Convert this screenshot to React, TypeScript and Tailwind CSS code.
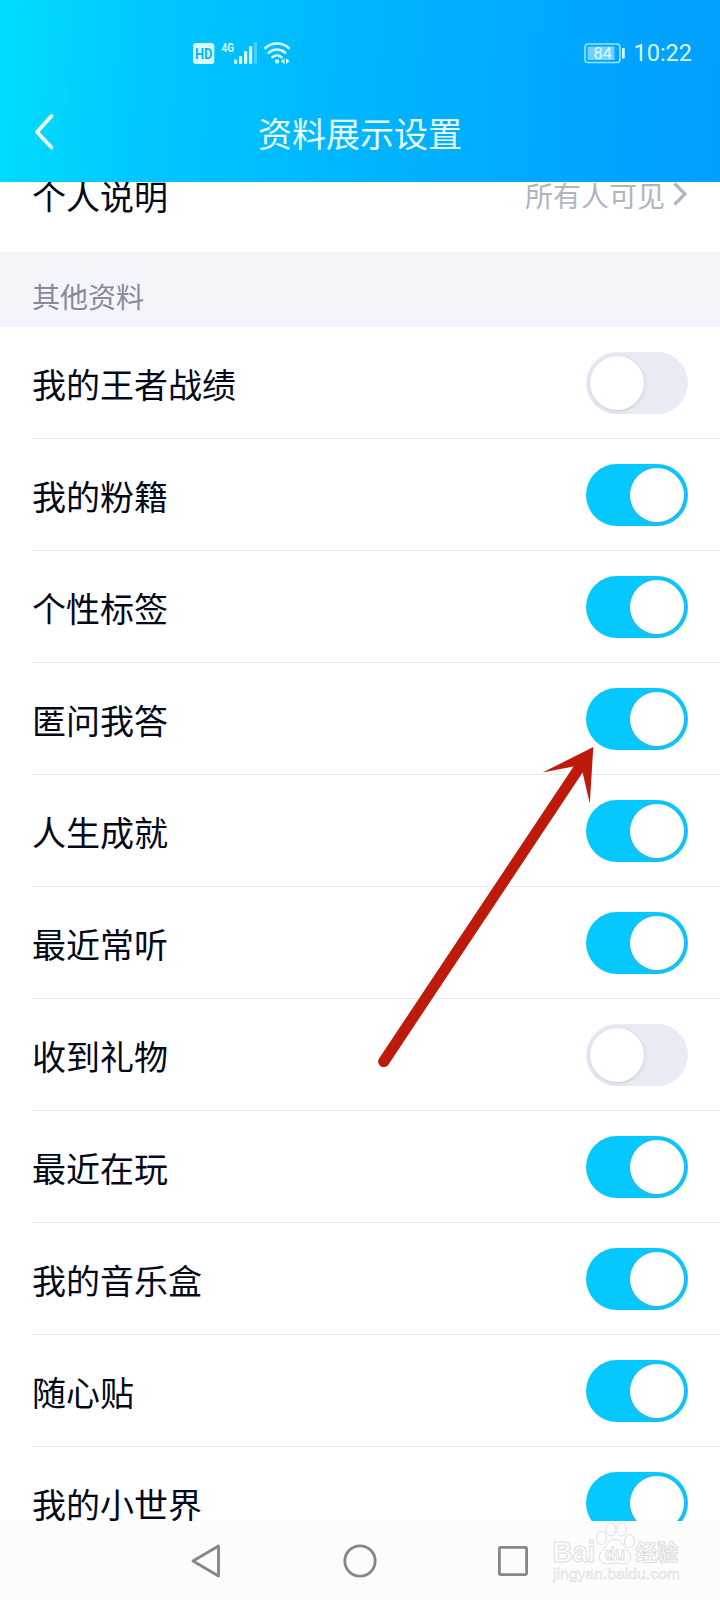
const settings = [
  { label: '我的王者战绩', on: false },
  { label: '我的粉籍', on: true },
  { label: '个性标签', on: true },
  { label: '匿问我答', on: true },
  { label: '人生成就', on: true },
  { label: '最近常听', on: true },
  { label: '收到礼物', on: false },
  { label: '最近在玩', on: true },
  { label: '我的音乐盒', on: true },
  { label: '随心贴', on: true },
  { label: '我的小世界', on: true },
]

function Toggle({ on }: { on: boolean }) {
  return (
    <button
      role="switch"
      aria-checked={on}
      className={`flex h-[62px] w-[102px] shrink-0 items-center rounded-full px-1 ${
        on ? 'justify-end bg-[#04c8ff]' : 'justify-start bg-[#e9ebf5]'
      }`}
    >
      <span
        className={`size-[54px] rounded-full bg-white ${
          on ? 'shadow-[0_1px_3px_0_rgba(130,150,180,0.6)]' : 'shadow-[0_1px_4px_0_rgba(120,125,150,0.3)]'
        }`}
      />
    </button>
  )
}

function StatusBar() {
  return (
    <div className="flex h-[82px] items-end justify-between pb-[14px] pr-7 pl-[193px] text-[#d9fbff]">
      <div className="flex h-[30px] items-center">
        <svg width="100" height="30" viewBox="0 0 100 30" fill="currentColor">
          {/* HD */}
          <rect x="0" y="5" width="21.3" height="21" rx="3" />
          <text x="10.7" y="20.8" textAnchor="middle" fontSize="15" fontWeight="700" fontFamily="Roboto, sans-serif" fill="#00b8f6" textLength="17.5" lengthAdjust="spacingAndGlyphs">HD</text>
          {/* segnale 4G */}
          <text x="28.5" y="13.6" fontSize="13.5" fontWeight="700" fontFamily="Roboto, sans-serif" textLength="12.5" lengthAdjust="spacingAndGlyphs">4G</text>
          <rect x="41" y="21.5" width="3.2" height="4.5" rx="1.3" />
          <rect x="46" y="18" width="3.2" height="8" rx="1.3" />
          <rect x="51" y="13" width="3.2" height="13" rx="1.3" />
          <rect x="56" y="8" width="3.2" height="18" rx="1.3" />
          <rect x="61" y="4" width="3" height="22" rx="1.3" opacity="0.3" />
          {/* wifi */}
          <g fill="none" stroke="currentColor" strokeWidth="2.6" strokeLinecap="round">
            <path d="M72.3 10a17.5 17.5 0 0 1 23.4 0" />
            <path d="M75.8 14.8a12 12 0 0 1 16.4 0" />
            <path d="M79.4 19.2a7 7 0 0 1 9.2 0" />
          </g>
          <circle cx="84" cy="23.4" r="2.2" />
          <path d="M91.5 20.2v6l-3.6-3zM93 20.2v6l3.6-3z" />
        </svg>
      </div>
      <div className="flex h-[30px] items-center gap-2">
        <svg width="41" height="22" viewBox="0 0 41 22" fill="currentColor">
          <rect x="1" y="2" width="35" height="18.5" rx="3" fill="none" stroke="#8cecff" strokeWidth="1.6" />
          <rect x="3.5" y="4.5" width="27" height="13.5" fill="#75cfff" />
          <text x="18.7" y="16.8" textAnchor="middle" fontSize="16.5" fontFamily="Roboto, sans-serif">84</text>
          <rect x="38" y="6" width="2.8" height="10.500" rx="1" />
        </svg>
        <span className="pt-0.5 font-[Roboto,sans-serif] text-[23.5px] leading-none">10:22</span>
      </div>
    </div>
  )
}

function Watermark() {
  return (
    <svg className="absolute top-0 left-[548px]" width="140" height="72" viewBox="0 0 140 72" fill="#fdfdfd" stroke="#dedede" strokeWidth="1">
      <text x="4.500" y="41" fontSize="29" fontWeight="700" fontFamily="Liberation Sans, sans-serif" textLength="43" lengthAdjust="spacingAndGlyphs">Bai</text>
      <ellipse cx="53.5" cy="17" rx="5" ry="6.5" />
      <ellipse cx="63" cy="8.5" rx="5" ry="6.5" />
      <ellipse cx="73.5" cy="8.5" rx="5" ry="6.5" />
      <ellipse cx="81.5" cy="20" rx="5" ry="6.5" />
      <path d="M67.500 18.500c-7 0-8.500 6-12.500 10.500-4 4-5 8-2 11.500 3.500 4 9 1.500 14.500 1.500s10 2.500 13.500-1.500c3-3.500 1.500-7.500-2-11.500-4.500-4.500-5-10.500-11.500-10.500z" />
      <text x="57" y="38.500" fontSize="19" fontWeight="700" fontFamily="Liberation Sans, sans-serif" textLength="20" lengthAdjust="spacingAndGlyphs">du</text>
      <text x="87.500" y="39" fontSize="22" fontWeight="700" fontFamily="Noto Sans CJK SC, sans-serif" textLength="43" lengthAdjust="spacingAndGlyphs">经验</text>
      <text x="5" y="58" fontSize="15.500" fontFamily="Liberation Sans, sans-serif" strokeWidth="0.600" textLength="127" lengthAdjust="spacingAndGlyphs">jingyan.baidu.com</text>
    </svg>
  )
}

export default function App() {
  return (
    <div className="relative flex h-[1600px] w-[720px] flex-col overflow-hidden bg-white font-['Noto_Sans_CJK_SC',sans-serif] text-[#03081a]">
      <header className="h-[182px] shrink-0 bg-[linear-gradient(94deg,#00ddff_0%,#00c6ff_22%,#00b2ff_55%,#00a2ff_90%,#00a0ff_100%)]">
        <StatusBar />
        <div className="grid h-[100px] grid-cols-[120px_1fr_120px] items-center">
          <svg className="ml-[33px]" width="22" height="38" viewBox="0 0 22 38" fill="none" stroke="#e8feff" strokeWidth="4" strokeLinecap="round" strokeLinejoin="round">
            <path d="M18.500 3L4 19l14.500 15.500" />
          </svg>
          <h1 className="pt-0.5 text-center text-[34px] leading-none text-[#eaffff]">资料展示设置</h1>
        </div>
      </header>

      <main className="min-h-0 flex-1 overflow-hidden">
        {/* riga parzialmente nascosta sotto l'header */}
        <div className="flex h-[70px] items-end overflow-hidden">
          <div className="flex h-[112px] w-full shrink-0 items-center justify-between pr-[33px] pl-8">
            <span className="text-[34px] leading-none">个人说明</span>
            <span className="flex items-center gap-2 text-[28px] leading-none text-[#b1b4c2]">
              <span className="pb-0.5">所有人可见</span>
              <svg className="mb-1" width="14" height="24" viewBox="0 0 14 24" fill="none" stroke="currentColor" strokeWidth="3.200">
                <path d="M1.500 1.500L12 12 1.500 22.500" />
              </svg>
            </span>
          </div>
        </div>

        <h2 className="flex h-[75px] items-center bg-[#f4f5fa] pt-3 pl-8 text-[28px] leading-none text-[#868a9b]">
          其他资料
        </h2>

        <ul>
          {settings.map(({ label, on }) => (
            <li key={label} className="ml-8 flex h-28 items-center justify-between border-b border-[#e9eaee] pr-8">
              <span className="pt-0.5 text-[34px] leading-none">{label}</span>
              <Toggle on={on} />
            </li>
          ))}
        </ul>
      </main>

      <nav className="relative h-[79px] shrink-0 bg-[#fcfcfc]">
        <div className="flex h-full items-center justify-between pr-[191px] pl-[190px]">
          <svg width="32" height="36" viewBox="0 0 32 36" fill="none" stroke="#868686" strokeWidth="2.800" strokeLinejoin="round">
            <path d="M28.500 3v30L3 18z" />
          </svg>
          <svg width="34" height="34" viewBox="0 0 34 34" fill="none" stroke="#868686" strokeWidth="2.800">
            <circle cx="17" cy="17" r="15.200" />
          </svg>
          <svg width="32" height="32" viewBox="0 0 32 32" fill="none" stroke="#868686" strokeWidth="2.800">
            <rect x="2.400" y="2.400" width="27.200" height="27.200" rx="1.500" />
          </svg>
        </div>
        <Watermark />
      </nav>

      {/* freccia di annotazione */}
      <svg className="pointer-events-none absolute top-[740px] left-[370px]" width="230" height="335" viewBox="370 740 230 335" fill="#bd1a0b">
        <path d="M593.300 747L542.500 772.600L573.600 766.500L378.900 1058.700A5.600 5.600 0 0 0 388.200 1064.900L582.600 772.500L589.800 803.500z" />
      </svg>
    </div>
  )
}
